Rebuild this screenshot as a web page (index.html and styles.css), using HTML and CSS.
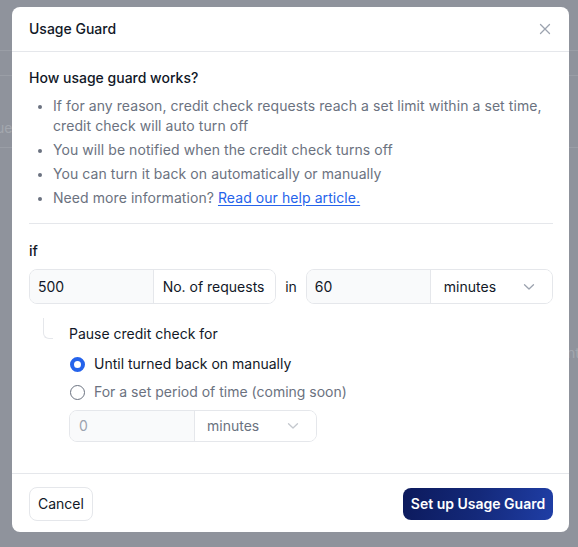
FILE: index.html
```html
<!DOCTYPE html>
<html lang="en">
<head>
<meta charset="utf-8">
<title>Usage Guard</title>
<link rel="stylesheet" href="styles.css">
</head>
<body>
<span class="bg-text bg-text-left">ue</span>
<span class="bg-text bg-text-right">nt</span>
<div class="modal">
  <div class="modal-header">
    <h2 class="modal-title">Usage Guard</h2>
    <button class="close-btn" aria-label="Close">
      <svg width="12" height="12" viewBox="0 0 12 12"><path d="M1.5 1.5 L10.5 10.5 M10.5 1.5 L1.5 10.5" stroke="#9ca3af" stroke-width="1.3" stroke-linecap="round"/></svg>
    </button>
  </div>
  <div class="modal-body">
    <h3 class="section-title">How usage guard works?</h3>
    <ul class="info-list">
      <li>If for any reason, credit check requests reach a set limit within a set time, credit check will auto turn off</li>
      <li>You will be notified when the credit check turns off</li>
      <li>You can turn it back on automatically or manually</li>
      <li>Need more information? <a href="#" class="link">Read our help article.</a></li>
    </ul>
    <div class="divider"></div>
    <div class="if-label">if</div>
    <div class="condition-row">
      <div class="input-group">
        <div class="field field-input">500</div>
        <div class="field field-addon">No. of requests</div>
      </div>
      <span class="in-label">in</span>
      <div class="input-group">
        <div class="field field-input">60</div>
        <div class="field field-select">
          <span>minutes</span>
          <svg class="chev" width="12" height="8" viewBox="0 0 12 8"><path d="M1.5 1.8 L6 6 L10.5 1.8" fill="none" stroke="#9ca3af" stroke-width="1.3" stroke-linecap="round" stroke-linejoin="round"/></svg>
        </div>
      </div>
    </div>
    <div class="pause-row">
      <div class="connector"></div>
      <div class="pause-content">
        <div class="pause-label">Pause credit check for</div>
        <div class="radio-list">
          <label class="radio-item">
            <span class="radio radio-checked"></span>
            <span class="radio-text">Until turned back on manually</span>
          </label>
          <label class="radio-item radio-disabled">
            <span class="radio"></span>
            <span class="radio-text">For a set period of time (coming soon)</span>
          </label>
        </div>
        <div class="input-group input-group-small">
          <div class="field field-input field-disabled">0</div>
          <div class="field field-select field-select-disabled">
            <span>minutes</span>
            <svg class="chev" width="12" height="8" viewBox="0 0 12 8"><path d="M1.5 1.8 L6 6 L10.5 1.8" fill="none" stroke="#c4c8ce" stroke-width="1.3" stroke-linecap="round" stroke-linejoin="round"/></svg>
          </div>
        </div>
      </div>
    </div>
  </div>
  <div class="modal-footer">
    <button class="btn btn-secondary">Cancel</button>
    <button class="btn btn-primary">Set up Usage Guard</button>
  </div>
</div>
</body>
</html>
```
FILE: styles.css
```css
* { box-sizing: border-box; }

html, body {
  margin: 0;
  padding: 0;
}

body {
  width: 578px;
  height: 547px;
  overflow: hidden;
  position: relative;
  font-family: Inter, "Liberation Sans", sans-serif;
  font-size: 14px;
  color: #111827;
  background-color: #8f939c;
  background-image:
    linear-gradient(to bottom, transparent 50px, #9a9ea6 50px, #9a9ea6 51px, transparent 51px),
    linear-gradient(to bottom, transparent 75px, #9a9ea6 75px, #9a9ea6 76px, transparent 76px),
    linear-gradient(to bottom, transparent 147px, #9a9ea6 147px, #9a9ea6 148px, transparent 148px);
  padding-top: 7px;
  padding-left: 12px;
}

.bg-text {
  position: absolute;
  font-size: 14px;
  color: #a3a7ae;
  line-height: 20px;
}
.bg-text-left { left: -4px; top: 118px; }
.bg-text-right { left: 567px; top: 343px; }

.modal {
  position: relative;
  width: 557px;
  height: 525px;
  background: #ffffff;
  border-radius: 8px;
  display: flex;
  flex-direction: column;
}

.modal-header {
  height: 45px;
  padding: 0 17px;
  border-bottom: 1px solid #e5e7eb;
  display: flex;
  align-items: center;
  justify-content: space-between;
}

.modal-title {
  margin: 0;
  font-size: 14px;
  font-weight: 500;
  line-height: 20px;
  color: #111827;
}

.close-btn {
  border: none;
  background: none;
  padding: 0;
  width: 12px;
  height: 12px;
  margin-right: 1px;
  display: flex;
}

.modal-body {
  flex: 1;
  padding: 16px 16px 0 17px;
}

.section-title {
  margin: 0;
  font-size: 14px;
  font-weight: 500;
  line-height: 20px;
  color: #111827;
}

.info-list {
  margin: 8px 0 0;
  padding-left: 24px;
  color: #6b7280;
  line-height: 20px;
  letter-spacing: 0.07px;
}
.info-list li + li { margin-top: 4px; }
.info-list li::marker { color: #6b7280; font-size: 12px; }

.link {
  color: #2563eb;
  text-decoration: underline;
  text-underline-offset: 2px;
}

.divider {
  height: 1px;
  background: #e5e7eb;
  margin: 15px 0 17px;
}

.if-label {
  line-height: 20px;
  font-weight: 500;
  color: #111827;
}

.condition-row {
  margin-top: 8px;
  display: flex;
  align-items: center;
  gap: 9px;
}

.in-label {
  line-height: 20px;
  color: #111827;
}

.input-group {
  display: flex;
  width: 248px;
  height: 35px;
  border: 1px solid #e5e7eb;
  border-radius: 8px;
  overflow: hidden;
}

.field {
  display: flex;
  align-items: center;
  line-height: 20px;
}

.field-input {
  width: 124px;
  background: #f9fafb;
  padding-left: 8px;
  color: #111827;
  border-right: 1px solid #e5e7eb;
}

.field-addon {
  flex: 1;
  justify-content: center;
  background: #ffffff;
  color: #111827;
  padding-right: 2px;
}

.field-select {
  flex: 1;
  justify-content: space-between;
  padding: 0 17px 0 13px;
  background: #ffffff;
  color: #111827;
}

.pause-row {
  display: flex;
  align-items: flex-start;
  margin-top: 14px;
  padding-left: 14px;
}

.connector {
  width: 10px;
  height: 21px;
  border-left: 1px solid #e5e7eb;
  border-bottom: 1px solid #e5e7eb;
  border-bottom-left-radius: 6px;
  flex-shrink: 0;
}

.pause-content {
  margin-left: 16px;
  padding-top: 6px;
}

.pause-label {
  line-height: 20px;
  color: #111827;
}

.radio-list {
  margin-top: 10px;
  display: flex;
  flex-direction: column;
  gap: 8px;
}

.radio-item {
  display: flex;
  align-items: center;
  gap: 9px;
  line-height: 20px;
  padding-left: 1px;
}

.radio {
  width: 15px;
  height: 15px;
  border-radius: 50%;
  border: 1px solid #6b7280;
  background: #ffffff;
  flex-shrink: 0;
}

.radio-checked {
  border: 4.5px solid #2563eb;
  background: #ffffff;
}

.radio-text { color: #111827; }
.radio-disabled .radio-text { color: #6b7280; }

.input-group-small {
  margin-top: 8px;
  width: 248px;
  height: 32px;
}

.field-disabled {
  width: 125px;
  color: #9ca3af;
  padding-left: 9px;
}

.field-select-disabled {
  color: #6b7280;
  padding: 0 17px 0 12px;
}

.modal-footer {
  height: 59px;
  border-top: 1px solid #e5e7eb;
  padding: 0 16px 0 17px;
  display: flex;
  align-items: center;
  justify-content: space-between;
}

.btn {
  font-family: Inter, "Liberation Sans", sans-serif;
  font-size: 14px;
  line-height: 20px;
  border-radius: 8px;
  cursor: pointer;
}

.btn-secondary {
  height: 34px;
  padding: 0 8px;
  background: #ffffff;
  border: 1px solid #e5e7eb;
  color: #111827;
  margin-top: 1px;
}

.btn-primary {
  height: 32px;
  width: 150px;
  padding: 0;
  border: none;
  color: #ffffff;
  font-weight: 600;
  background: linear-gradient(100deg, #0c1a5c 0%, #14297a 50%, #1f3ea6 100%);
  margin-top: 1px;
}
```
